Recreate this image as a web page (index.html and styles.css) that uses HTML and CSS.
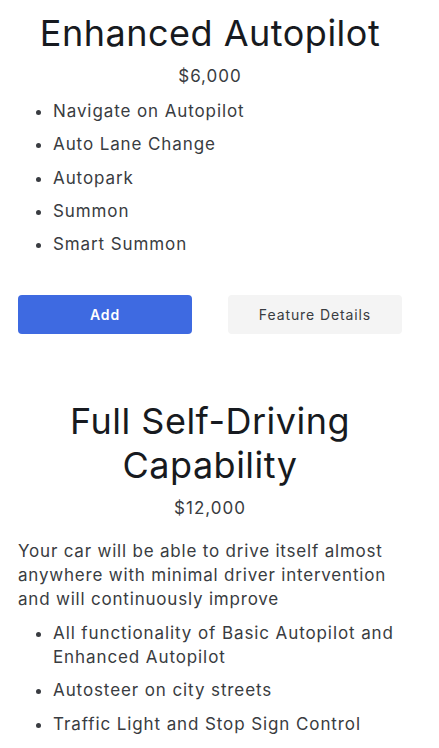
FILE: index.html
```html
<!DOCTYPE html>
<html lang="en">
<head>
    <meta charset="UTF-8">
    <meta name="viewport" content="width=device-width, initial-scale=1.0">
    <title>Autopilot Options</title>
    <link rel="stylesheet" href="styles.css">
</head>
<body>
    <div class="page">
        <section class="option">
            <h1 class="option-title">Enhanced Autopilot</h1>
            <div class="option-price">$6,000</div>
            <ul class="features">
                <li>Navigate on Autopilot</li>
                <li>Auto Lane Change</li>
                <li>Autopark</li>
                <li>Summon</li>
                <li>Smart Summon</li>
            </ul>
            <div class="actions">
                <button class="btn btn-primary">Add</button>
                <button class="btn btn-secondary">Feature Details</button>
            </div>
        </section>

        <section class="option option-fsd">
            <h1 class="option-title">Full Self-Driving Capability</h1>
            <div class="option-price">$12,000</div>
            <p class="option-desc">Your car will be able to drive itself almost anywhere with minimal driver intervention and will continuously improve</p>
            <ul class="features">
                <li>All functionality of Basic Autopilot and Enhanced Autopilot</li>
                <li>Autosteer on city streets</li>
                <li>Traffic Light and Stop Sign Control</li>
            </ul>
        </section>
    </div>
</body>
</html>
```

FILE: styles.css
```css
body {
    margin: 0;
    font-family: Inter, "Open Sans", sans-serif;
    color: #393c41;
    background: #fff;
}
.page {
    width: 384px;
    padding: 0 18px;
}
.option-title {
    margin: 11px 0 0;
    font-size: 36px;
    line-height: 44px;
    font-weight: 400;
    letter-spacing: 0.5px;
    color: #171a20;
    text-align: center;
}
.option-fsd .option-title {
    margin-top: 65px;
    padding: 0 40px;
}
.option-price {
    margin-top: 9px;
    font-size: 17px;
    line-height: 24px;
    letter-spacing: 1px;
    text-align: center;
}
.features {
    margin: 11px 0 0;
    padding-left: 35px;
    font-size: 17px;
    line-height: 24px;
    letter-spacing: 0.9px;
}
.features li {
    margin-bottom: 9.3px;
}
.actions {
    display: flex;
    justify-content: space-between;
    margin-top: 39px;
}
.btn {
    width: 174px;
    height: 39px;
    border: none;
    border-radius: 4px;
    font-family: inherit;
    font-size: 14px;
    letter-spacing: 0.9px;
    cursor: pointer;
}
.btn-primary {
    background-color: #3e6ae1;
    color: white;
    font-weight: 600;
}
.btn-secondary {
    background-color: #f4f4f4;
    color: #393c41;
}
.option-desc {
    margin: 19px 0 0;
    font-size: 17px;
    line-height: 24px;
    letter-spacing: 0.8px;
}
.option-fsd .features {
    margin-top: 10px;
}
```
